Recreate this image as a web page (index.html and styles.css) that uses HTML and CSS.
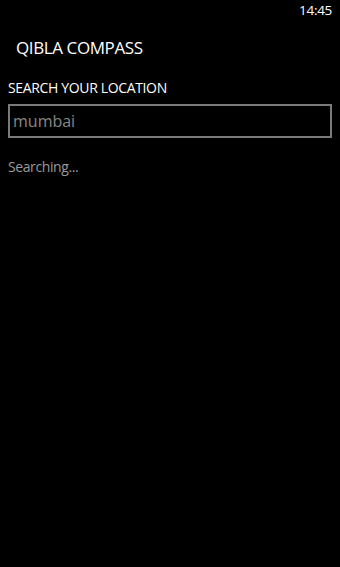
FILE: index.html
```
<!DOCTYPE html>
<html>
<head>
<meta charset="utf-8">
<link rel="stylesheet" href="styles.css">
</head>
<body>
<div class="screen">
  <div class="status-bar"><span class="time">14:45</span></div>
  <div class="app-title">QIBLA COMPASS</div>
  <div class="content">
    <div class="label">SEARCH YOUR LOCATION</div>
    <input class="search-box" type="text" value="mumbai">
    <div class="status-text">Searching...</div>
  </div>
</div>
</body>
</html>
```
FILE: styles.css
```
html, body {
  margin: 0;
  padding: 0;
  background: #000;
}
.screen {
  width: 340px;
  height: 567px;
  background: #000;
  color: #fff;
  font-family: "Open Sans", "Noto Sans", sans-serif;
  display: flex;
  flex-direction: column;
}
.status-bar {
  display: flex;
  justify-content: flex-end;
  padding-right: 8px;
  height: 20px;
}
.time {
  font-size: 13.5px;
  letter-spacing: -0.3px;
  line-height: 20px;
}
.app-title {
  margin-top: 16px;
  padding-left: 16px;
  font-size: 17px;
  letter-spacing: -0.4px;
  line-height: 24px;
}
.content {
  display: flex;
  flex-direction: column;
  padding: 0 8px;
}
.label {
  margin-top: 18px;
  font-size: 14px;
  letter-spacing: -0.35px;
  line-height: 20px;
}
.search-box {
  margin: 6px 0 0 0;
  box-sizing: border-box;
  width: 324px;
  height: 34px;
  border: 2px solid #7a7a7a;
  background: #000;
  color: #888;
  font-family: "Open Sans", "Noto Sans", sans-serif;
  font-size: 16px;
  padding: 0 3px;
  outline: none;
}
.status-text {
  margin-top: 19px;
  font-size: 14px;
  letter-spacing: -0.4px;
  line-height: 20px;
  color: #9a9a9a;
}
```
